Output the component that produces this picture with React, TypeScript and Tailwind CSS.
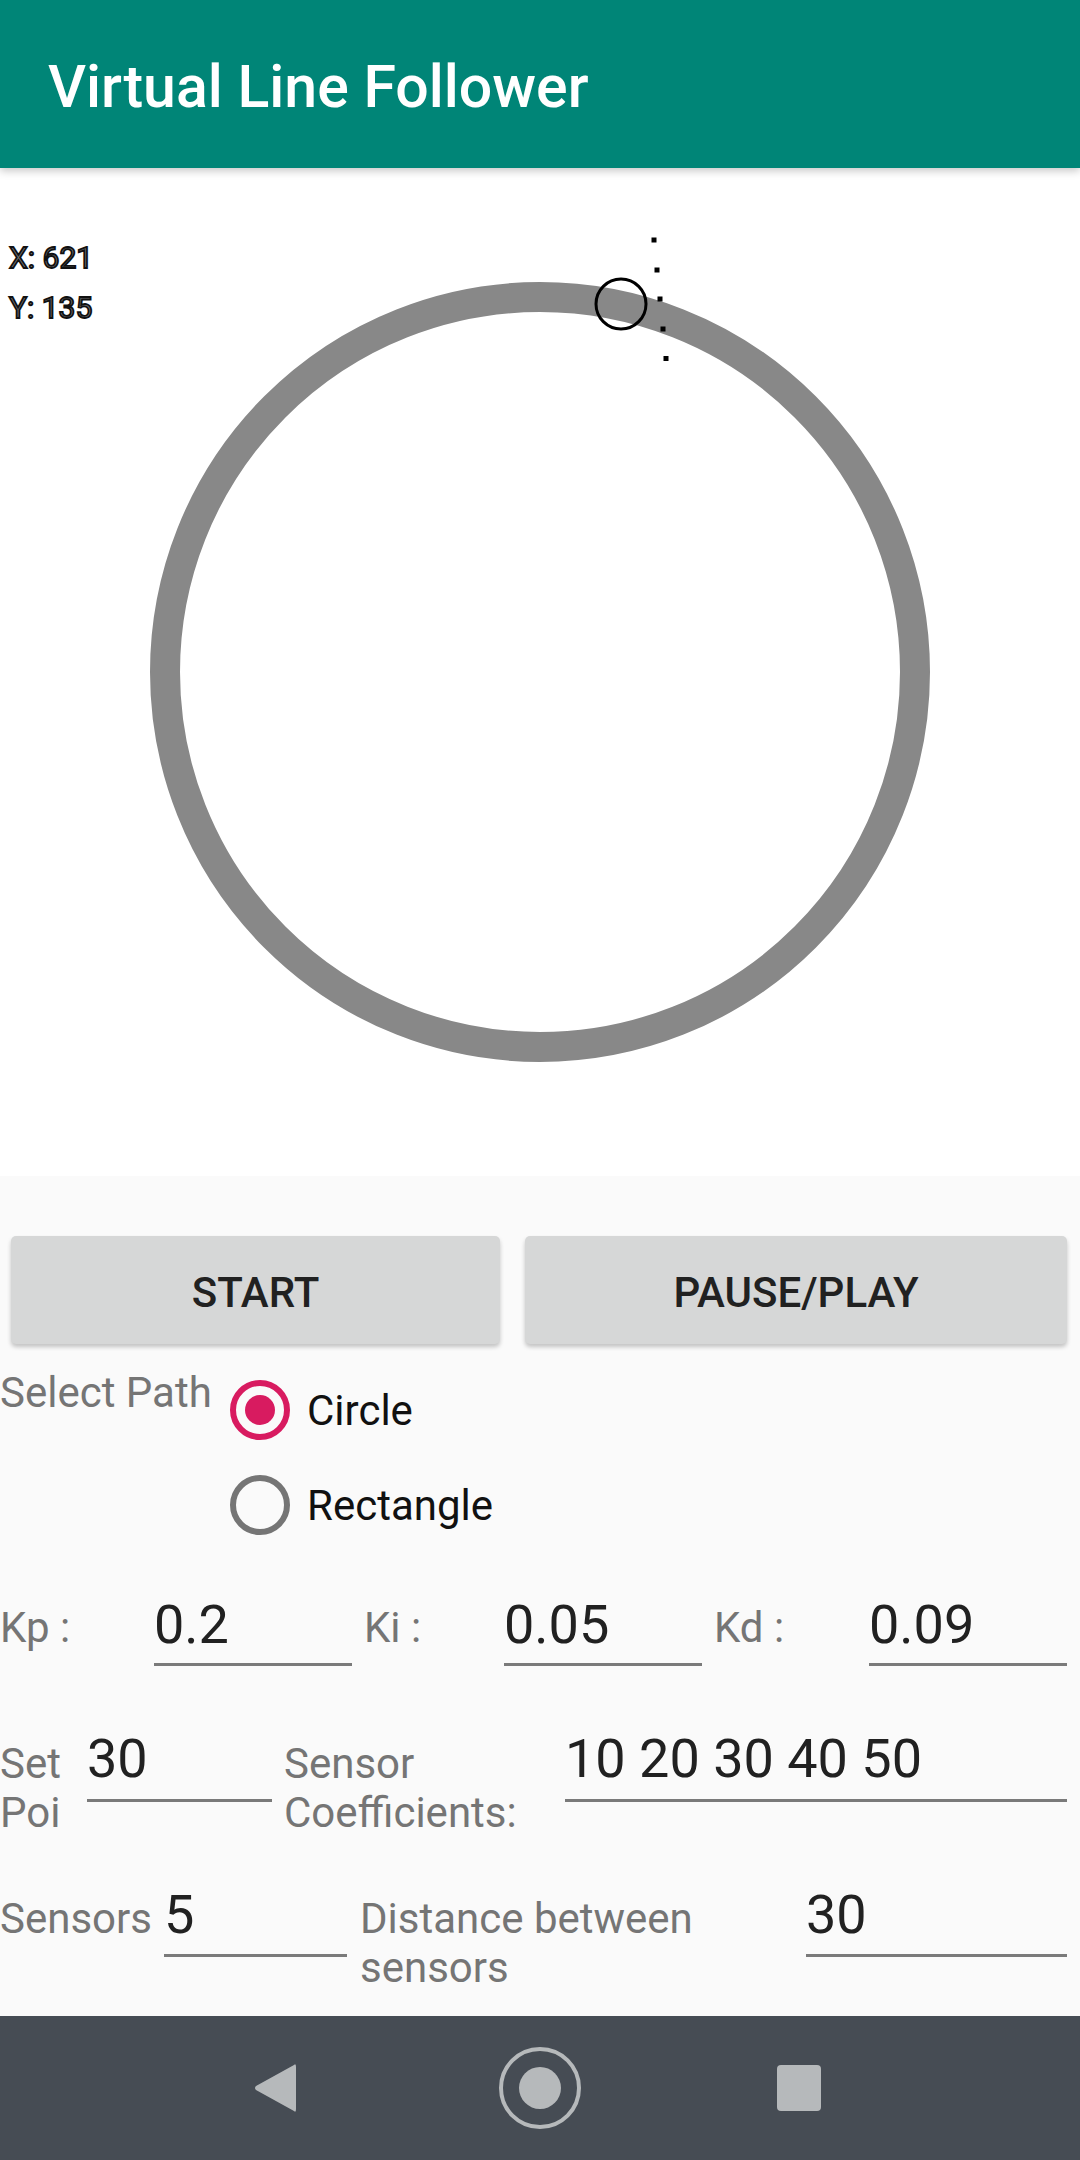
import React from 'react';

const sensorDots = [
  { x: 654, y: 72 },
  { x: 657, y: 102 },
  { x: 660, y: 131 },
  { x: 663, y: 161 },
  { x: 666, y: 190.5 },
];

const Field = ({ value, width, pb }: { value: string; width: string; pb: string }) => (
  <div className={`${width} ${pb} border-b-[3px] border-[#7a7a7a]`}>
    <div className="text-[54px] leading-[63px] text-[#212121]">{value}</div>
  </div>
);

const Radio = ({ checked, label }: { checked: boolean; label: string }) => (
  <div className="flex items-center h-[60px]">
    <div
      className={`w-[60px] h-[60px] rounded-full border-[6px] flex items-center justify-center ${
        checked ? 'border-[#d81b60]' : 'border-[#757575]'
      }`}
    >
      {checked && <div className="w-[30px] h-[30px] rounded-full bg-[#d81b60]" />}
    </div>
    <span className="ml-[17px] text-[42px] leading-[49px] text-[#111]">{label}</span>
  </div>
);

const App: React.FC = () => {
  return (
    <div className="w-[1080px] h-[2160px] flex flex-col font-['Roboto',sans-serif] bg-white overflow-hidden">
      {/* app bar */}
      <div className="relative z-10 h-[168px] shrink-0 bg-[#008577] flex items-center pl-[48px] pt-[5px] shadow-[0_3px_8px_rgba(0,0,0,0.22)]">
        <h1 className="text-[59px] leading-none font-medium text-white">Virtual Line Follower</h1>
      </div>

      {/* track canvas */}
      <div className="relative h-[1008px] shrink-0 bg-white">
        <svg width="1080" height="1008" viewBox="0 0 1080 1008" className="block">
          <circle cx="540" cy="504" r="375" fill="none" stroke="#888888" strokeWidth="30" />
          <circle cx="621" cy="136" r="25" fill="none" stroke="#000" strokeWidth="3" />
          {sensorDots.map((d, i) => (
            <rect key={i} x={d.x - 2.5} y={d.y - 2.5} width="5" height="5" fill="#000" />
          ))}
          <text x="9" y="100" fontSize="30" fontWeight="400" fill="#777" stroke="#111" strokeWidth="1.8" fontFamily="Roboto">
            X: 621
          </text>
          <text x="9" y="150" fontSize="30" fontWeight="400" fill="#777" stroke="#111" strokeWidth="1.8" fontFamily="Roboto">
            Y: 135
          </text>
        </svg>
      </div>

      {/* controls */}
      <div className="h-[840px] shrink-0 bg-[#fafafa] flex flex-col">
        <div className="flex mt-[60px] pl-[11px] gap-[25px]">
          <button className="w-[489px] h-[108px] rounded-[5px] bg-[#d6d7d7] shadow-[0_3px_4px_rgba(0,0,0,0.22)] text-[42px] leading-none font-medium text-[#212121] pt-[5px]">
            START
          </button>
          <button className="w-[542px] h-[108px] rounded-[5px] bg-[#d6d7d7] shadow-[0_3px_4px_rgba(0,0,0,0.22)] text-[42px] leading-none font-medium text-[#212121] pt-[5px]">
            PAUSE/PLAY
          </button>
        </div>

        <div className="flex mt-[24px]">
          <div className="w-[230px] text-[42px] leading-[49px] text-[#757575]">Select Path</div>
          <div className="flex flex-col mt-[12px] gap-[35px]">
            <Radio checked label="Circle" />
            <Radio checked={false} label="Rectangle" />
          </div>
        </div>

        {/* PID row */}
        <div className="flex items-start mt-[58px] text-[42px] leading-[49px] text-[#757575]">
          <div className="w-[154px] mt-[10px]">Kp :</div>
          <Field value="0.2" width="w-[198px]" pb="pb-[7px]" />
          <div className="w-[152px] pl-[12px] mt-[10px]">Ki :</div>
          <Field value="0.05" width="w-[198px]" pb="pb-[7px]" />
          <div className="w-[167px] pl-[12px] mt-[10px]">Kd :</div>
          <Field value="0.09" width="w-[198px]" pb="pb-[7px]" />
        </div>

        {/* set point row */}
        <div className="flex items-start mt-[61px] text-[42px] leading-[49px] text-[#757575]">
          <div className="w-[87px] mt-[12px]">
            Set
            <br />
            Poi
          </div>
          <Field value="30" width="w-[185px]" pb="pb-[9px]" />
          <div className="w-[293px] pl-[12px] mt-[12px]">
            Sensor
            <br />
            Coefficients:
          </div>
          <Field value="10 20 30 40 50" width="w-[502px]" pb="pb-[9px]" />
        </div>

        {/* sensors row */}
        <div className="flex items-start mt-[46px] text-[42px] leading-[49px] text-[#757575]">
          <div className="w-[164px] mt-[11px]">Sensors</div>
          <Field value="5" width="w-[183px]" pb="pb-[8px]" />
          <div className="w-[459px] pl-[13px] mt-[11px]">
            Distance between
            <br />
            sensors
          </div>
          <Field value="30" width="w-[261px]" pb="pb-[8px]" />
        </div>
      </div>

      {/* system nav bar */}
      <div className="h-[144px] shrink-0 bg-[#464c54] flex items-center">
        <svg width="42" height="50" viewBox="0 0 42 50" className="ml-[254px]">
          <path d="M40 2 Q42 0 42 4 L42 46 Q42 50 40 48 L2 27 Q0 25 2 23 Z" fill="#b6b9bb" />
        </svg>
        <svg width="84" height="84" viewBox="0 0 84 84" className="ml-[202px]">
          <circle cx="42" cy="42" r="39" fill="none" stroke="#b6b9bb" strokeWidth="4" />
          <circle cx="42" cy="42" r="21" fill="#b6b9bb" />
        </svg>
        <div className="ml-[195px] w-[44px] h-[46px] rounded-[4px] bg-[#b6b9bb]" />
      </div>
    </div>
  );
};

export default App;
